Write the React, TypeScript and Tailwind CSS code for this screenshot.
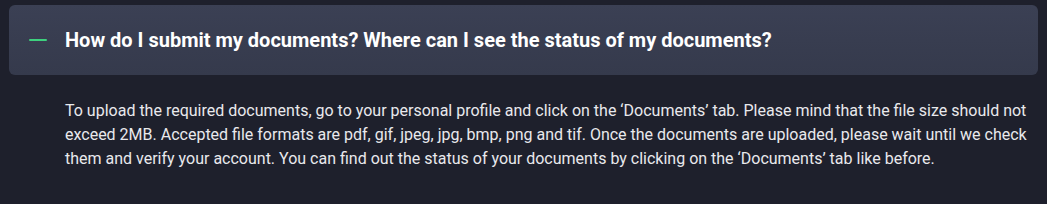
import React from "react";

export default function App() {
  return (
    <div className="w-[1047px] h-[204px] bg-[#1e202c] pt-[5px] px-[9px] font-['Roboto',sans-serif]">
      {/* Question header */}
      <div className="h-[70px] rounded-md bg-gradient-to-b from-[#3b4054] to-[#353a4c] flex items-center pl-[20px] pr-6">
        <span className="w-[18px] h-[2px] bg-[#3dd17e] rounded-full mr-[18px] shrink-0" />
        <h3 className="text-[20px] font-bold text-white -mt-[1px]">
          How do I submit my documents? Where can I see the status of my documents?
        </h3>
      </div>

      {/* Answer */}
      <div className="pl-[56px] pr-[6px] pt-[24px]">
        <p className="text-[16px] leading-[24px] text-[#e9e9ec]">
          To upload the required documents, go to your personal profile and click on the ‘Documents’ tab. Please mind that the file size should not exceed 2MB. Accepted file formats are pdf, gif, jpeg, jpg, bmp, png and tif. Once the documents are uploaded, please wait until we check them and verify your account. You can find out the status of your documents by clicking on the ‘Documents’ tab like before.
        </p>
      </div>
    </div>
  );
}
